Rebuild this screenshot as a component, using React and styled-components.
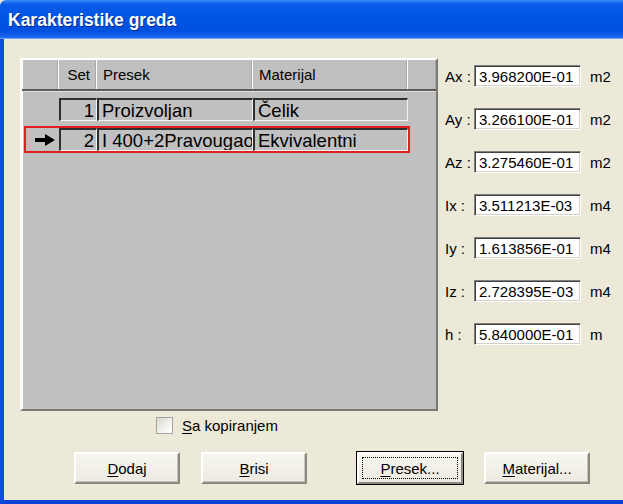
import React from "react";
import styled, { createGlobalStyle } from "styled-components";

const GlobalStyle = createGlobalStyle`
  html, body {
    margin: 0;
    padding: 0;
    background: #ECE9D8;
    overflow: hidden;
  }
  * { box-sizing: border-box; }
`;

const FONT = `"Liberation Sans", Arial, sans-serif`;

const columns = [
    { key: "ind", width: 36, label: "" },
    { key: "set", width: 38, label: "Set", align: "right" },
    { key: "presek", width: 156, label: "Presek" },
    { key: "materijal", width: 155, label: "Materijal" },
    { key: "extra", width: 29, label: "" },
];

const rows = [
    { set: 1, presek: "Proizvoljan", materijal: "Čelik" },
    { set: 2, presek: "I 400+2Pravougaonik", materijal: "Ekvivalentni", current: true },
];

const props = [
    { label: "Ax :", value: "3.968200E-01", unit: "m2" },
    { label: "Ay :", value: "3.266100E-01", unit: "m2" },
    { label: "Az :", value: "3.275460E-01", unit: "m2" },
    { label: "Ix :", value: "3.511213E-03", unit: "m4" },
    { label: "Iy :", value: "1.613856E-01", unit: "m4" },
    { label: "Iz :", value: "2.728395E-03", unit: "m4" },
    { label: "h :", value: "5.840000E-01", unit: "m" },
];

const Window = styled.div`
    width: 623px;
    height: 504px;
    display: flex;
    flex-direction: column;
    font-family: ${FONT};
    color: #000;
`;

const TitleBar = styled.div`
    height: 39px;
    flex: none;
    display: flex;
    align-items: center;
    padding: 1px 0 0 8px;
    background: linear-gradient(to bottom, #3D8EF8 0px, #0A5CE8 4px, #0055E3 45%, #0250E0 80%, #1A68EE 96%, #9FBDF3 100%);
    border-top-left-radius: 6px;
`;

const Title = styled.span`
    font-family: ${FONT};
    font-weight: bold;
    font-size: 17.5px;
    color: #fff;
    text-shadow: 1px 1px 0 #0A2A8E;
`;

const Client = styled.div`
    flex: 1;
    background: #ECE9D8;
    border-left: 4px solid #0A4FDE;
    border-bottom: 4px solid #0A43D6;
    padding: 19px 0 0 16px;
    display: flex;
    flex-direction: column;
`;

const TopSection = styled.div`
    display: flex;
    align-items: flex-start;
`;

const GridFrame = styled.div`
    width: 418px;
    height: 353px;
    flex: none;
    display: flex;
    flex-direction: column;
    border-top: 2px solid #FFFFFF;
    border-left: 2px solid #FFFFFF;
    border-right: 2px solid #7A7A72;
    border-bottom: 2px solid #7A7A72;
    box-shadow: inset -1px -1px 0 #F4F4F4;
    background: #C0C0C0;
`;

const HeaderRow = styled.div`
    height: 29px;
    flex: none;
    display: flex;
    background: #C0C0C0;
`;

const HeaderCell = styled.div`
    width: ${p => p.$w}px;
    flex: none;
    display: flex;
    align-items: center;
    justify-content: ${p => (p.$align === "right" ? "flex-end" : "flex-start")};
    padding: 0 5px 0 7px;
    font-size: 15px;
    border-right: 1px solid #A8A8A8;
    box-shadow: inset 1px 0 0 #FFFFFF;
`;

const Divider = styled.div`
    height: 3px;
    flex: none;
    border-top: 2px solid #5C5C5C;
    background: #E4E2D6;
`;

const GridBody = styled.div`
    flex: 1;
    display: flex;
    flex-direction: column;
    gap: 3px;
    padding: 4px 0 0 1px;
    border-left: 1px solid #FFFFFF;
    background: #C0C0C0;
`;

const Row = styled.div`
    height: 27px;
    width: 386px;
    display: flex;
    border: 2px solid ${p => (p.$current ? "#E02020" : "transparent")};
`;

const Indicator = styled.div`
    width: 33px;
    flex: none;
    display: flex;
    align-items: center;
    justify-content: center;
    padding-left: 4px;
`;

const Cell = styled.div`
    width: ${p => p.$w}px;
    flex: none;
    overflow: hidden;
    white-space: nowrap;
    display: flex;
    align-items: center;
    justify-content: ${p => (p.$align === "right" ? "flex-end" : "flex-start")};
    padding: 1px 2px 0 3px;
    font-size: 18.5px;
    border-top: 2px solid #2E2E2E;
    border-left: 2px solid #2E2E2E;
    border-right: 1px solid #F2F2F2;
    border-bottom: 1px solid #F2F2F2;
`;

const Panel = styled.div`
    display: flex;
    flex-direction: column;
    gap: 21px;
    padding: 7px 0 0 7px;
`;

const PropRow = styled.div`
    display: flex;
    align-items: center;
    height: 22px;
`;

const PropLabel = styled.span`
    width: 29px;
    font-size: 15px;
    white-space: pre;
`;

const ValueBox = styled.div`
    width: 107px;
    height: 22px;
    display: flex;
    align-items: center;
    padding-left: 4px;
    background: #FFFFFF;
    font-size: 15px;
    border-top: 1px solid #7F7F7F;
    border-left: 1px solid #7F7F7F;
    border-right: 1px solid #FFFFFF;
    border-bottom: 1px solid #FFFFFF;
    box-shadow: inset 1px 1px 0 #404040, inset -1px -1px 0 #D4D0C8;
`;

const Unit = styled.span`
    margin-left: 9px;
    font-size: 15px;
`;

const CheckRow = styled.label`
    display: flex;
    align-items: center;
    gap: 9px;
    margin: 6px 0 0 136px;
    height: 17px;
    font-size: 15px;
`;

const CheckBox = styled.span`
    width: 17px;
    height: 17px;
    border: 1px solid #A3A3A0;
    background: linear-gradient(135deg, #D8D8D2 0%, #F4F4F0 60%, #FFFFFF 100%);
`;

const ButtonRow = styled.div`
    display: flex;
    margin: 18px 0 0 54px;
`;

const Button = styled.button`
    width: 106px;
    height: 32px;
    margin-left: ${p => p.$gap || 0}px;
    font-family: ${FONT};
    font-size: 15px;
    color: #000;
    padding: 0;
    background: linear-gradient(to bottom, #F7F6F0, #ECEAE0);
    border-top: 2px solid #FFFFFF;
    border-left: 2px solid #FFFFFF;
    border-right: 2px solid #8C8A80;
    border-bottom: 2px solid #8C8A80;
    box-shadow: ${p => (p.$default ? "0 0 0 1px #000" : "inset -1px -1px 0 #C8C5B8")};
    outline: ${p => (p.$default ? "1px dotted #000" : "none")};
    outline-offset: -6px;
`;

const Key = styled.span`
    text-decoration: underline;
    text-underline-offset: 2px;
`;

const Arrow = () => (
    <svg width="20" height="12" viewBox="0 0 20 12">
        <rect x="0" y="4" width="12" height="4" fill="#000" />
        <path d="M10 0 L20 6 L10 12 Z" fill="#000" />
    </svg>
);

const Label = ({ text }) => (
    <span>
        <Key>{text.slice(0, 1)}</Key>
        {text.slice(1)}
    </span>
);

const App = () => (
    <Window>
        <GlobalStyle />
        <TitleBar>
            <Title>Karakteristike greda</Title>
        </TitleBar>
        <Client>
            <TopSection>
                <GridFrame>
                    <HeaderRow>
                        {columns.map(c => (
                            <HeaderCell key={c.key} $w={c.width} $align={c.align}>
                                {c.label}
                            </HeaderCell>
                        ))}
                    </HeaderRow>
                    <Divider />
                    <GridBody>
                        {rows.map(r => (
                            <Row key={r.set} $current={r.current}>
                                <Indicator>{r.current && <Arrow />}</Indicator>
                                <Cell $w={38} $align="right">{r.set}</Cell>
                                <Cell $w={156}>{r.presek}</Cell>
                                <Cell $w={155}>{r.materijal}</Cell>
                            </Row>
                        ))}
                    </GridBody>
                </GridFrame>
                <Panel>
                    {props.map(p => (
                        <PropRow key={p.label}>
                            <PropLabel>{p.label}</PropLabel>
                            <ValueBox>{p.value}</ValueBox>
                            <Unit>{p.unit}</Unit>
                        </PropRow>
                    ))}
                </Panel>
            </TopSection>
            <CheckRow>
                <CheckBox />
                <Label text="Sa kopiranjem" />
            </CheckRow>
            <ButtonRow>
                <Button><Label text="Dodaj" /></Button>
                <Button $gap={21}><Label text="Brisi" /></Button>
                <Button $gap={50} $default><Label text="Presek..." /></Button>
                <Button $gap={21}><Label text="Materijal..." /></Button>
            </ButtonRow>
        </Client>
    </Window>
);

export default App;
